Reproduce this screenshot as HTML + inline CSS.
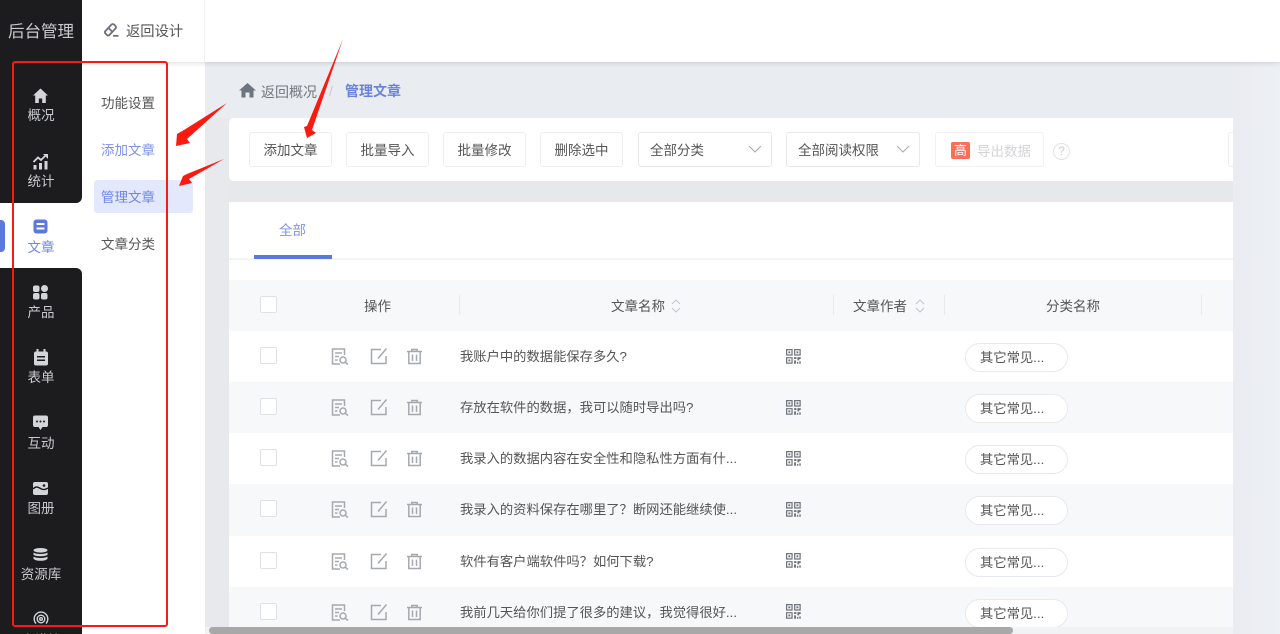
<!DOCTYPE html>
<html lang="zh"><head><meta charset="utf-8"><title>管理文章</title>
<style>
*{box-sizing:border-box;margin:0;padding:0}
html,body{width:1280px;height:634px;overflow:hidden}
body{position:relative;background:#e9ecf1;font-family:"Liberation Sans","Noto Sans CJK SC",sans-serif;font-size:13.5px;color:#555}
.a{position:absolute;white-space:nowrap}
.t{position:absolute;white-space:nowrap;line-height:20px}
.nav{position:absolute;left:0;width:82px;text-align:center;color:#c9cace;font-size:13.5px;line-height:18px}
.btn{position:absolute;top:132px;height:35px;background:#fff;border:1px solid #eceef1;border-radius:3px;text-align:center;line-height:35px;color:#555}
.sel{position:absolute;top:132px;height:35px;background:#fff;border:1px solid #e6e8ec;border-radius:3px;line-height:35px;color:#555;padding-left:11px}
.row{position:absolute;left:229px;width:1004px;height:51px}
.cb{position:absolute;left:31px;top:16px;width:17px;height:17px;background:#fff;border:1px solid #dfe1e6;border-radius:2px}
.tag{position:absolute;left:736px;top:12px;width:103px;height:29px;background:#fff;border:1px solid #e8e9ed;border-radius:15px;line-height:27px;padding-left:14px;color:#555;font-size:13.3px}
.ti{position:absolute;left:231px;top:16px;line-height:20px;font-size:13.3px;color:#555;white-space:nowrap}
svg{position:absolute;overflow:visible}
.div{position:absolute;top:295px;width:1px;height:20px;background:#e8e9ed}
</style></head><body>

<!-- second panel and header -->
<div class="a" style="left:0;top:0;width:205px;height:634px;background:#fff"></div>
<div class="a" style="left:1233px;top:62px;width:47px;height:572px;background:linear-gradient(90deg,#e9ecf1,#edf0f4)"></div>
<div class="a" style="left:82px;top:0;width:1198px;height:62px;background:#fff;box-shadow:0 1px 5px rgba(0,0,0,.14)"></div>
<div class="a" style="left:204px;top:0;width:1px;height:62px;background:#f0f1f3"></div>
<div class="a" style="left:205px;top:118px;width:24px;height:516px;background:#e7e9ed"></div>

<!-- sidebar -->
<div class="a" style="left:0;top:0;width:82px;height:203px;background:#1c1c1f;border-bottom-right-radius:6px"></div>
<div class="a" style="left:0;top:268px;width:82px;height:366px;background:#1c1c1f;border-top-right-radius:6px"></div>
<div class="a" style="left:0;top:220px;width:5px;height:32px;background:#5b78e0;border-radius:0 4px 4px 0"></div>
<div class="t" style="left:8px;top:22px;font-size:16.5px;color:#c9cace">后台管理</div>

<svg style="left:32px;top:87px" width="17" height="17" viewBox="0 0 17 17"><path d="M8.500 1.500 16 8.500h-2.200V16h-3.600v-4.500H6.800V16H3.200V8.500H1z" fill="#d4d5d9"/></svg>
<div class="nav" style="top:107px">概况</div>
<svg style="left:32px;top:153px" width="17" height="17" viewBox="0 0 17 17"><path d="M1.500 9 6 4.500l3 2.500 4-4" fill="none" stroke="#d4d5d9" stroke-width="1.800"/><path d="M11 1h5v5z" fill="#d4d5d9"/><rect x="1.500" y="12" width="3" height="4.500" fill="#d4d5d9"/><rect x="7" y="10" width="3" height="6.500" fill="#d4d5d9"/><rect x="12.500" y="8" width="3" height="8.500" fill="#d4d5d9"/></svg>
<div class="nav" style="top:173px">统计</div>
<svg style="left:33px;top:219px" width="15" height="15" viewBox="0 0 15 15"><rect x=".5" y=".5" width="14" height="14" rx="3" fill="#5b78e0"/><rect x="3.500" y="4" width="8" height="2" fill="#fff"/><rect x="3.500" y="8.500" width="8" height="2" fill="#fff"/></svg>
<div class="nav" style="top:239px;color:#6d87e6">文章</div>
<svg style="left:33px;top:285px" width="15" height="15" viewBox="0 0 15 15" fill="#d4d5d9"><rect x="0" y="0.500" width="6.500" height="6.500" rx="2"/><rect x="8" y="0" width="7" height="7" rx="3.500"/><rect x="0" y="8" width="6.500" height="6.500" rx="2"/><rect x="8" y="8" width="6.500" height="6.500" rx="2"/></svg>
<div class="nav" style="top:304px">产品</div>
<svg style="left:33px;top:349px" width="16" height="17" viewBox="0 0 16 17"><rect x="1" y="2.500" width="14" height="14" rx="2" fill="#d4d5d9"/><rect x="3.500" y="0" width="2" height="4" fill="#d4d5d9"/><rect x="10.500" y="0" width="2" height="4" fill="#d4d5d9"/><rect x="4" y="7" width="8" height="1.500" fill="#1c1c1f"/><rect x="4" y="10.500" width="8" height="1.500" fill="#1c1c1f"/></svg>
<div class="nav" style="top:369px">表单</div>
<svg style="left:33px;top:415px" width="15" height="16" viewBox="0 0 15 16"><path d="M2 .5h11a2 2 0 0 1 2 2V10a2 2 0 0 1-2 2h-3.500L7.500 15 5.500 12H2a2 2 0 0 1-2-2V2.500a2 2 0 0 1 2-2z" fill="#d4d5d9"/><circle cx="4" cy="6.500" r="1" fill="#1c1c1f"/><circle cx="7.500" cy="6.500" r="1" fill="#1c1c1f"/><circle cx="11" cy="6.500" r="1" fill="#1c1c1f"/></svg>
<div class="nav" style="top:435px">互动</div>
<svg style="left:33px;top:482px" width="15" height="13" viewBox="0 0 15 13"><rect width="15" height="13" rx="2" fill="#d4d5d9"/><path d="M0 7c3-3 5-2 7.500-.500S12 8 15 6" fill="none" stroke="#1c1c1f" stroke-width="1.500"/><circle cx="11" cy="3.500" r="1.300" fill="#1c1c1f"/></svg>
<div class="nav" style="top:500px">图册</div>
<svg style="left:33px;top:548px" width="15" height="13" viewBox="0 0 15 13" fill="#d4d5d9"><ellipse cx="7.500" cy="2.300" rx="7" ry="2.300"/><path d="M.5 4.500c2 2 12 2 14 0v2.200c-2 2-12 2-14 0zM.5 8.500c2 2 12 2 14 0v2.200c-2 2.800-12 2.800-14 0z"/></svg>
<div class="nav" style="top:566px">资源库</div>
<svg style="left:33px;top:611px" width="16" height="16" viewBox="0 0 16 16" fill="none" stroke="#d4d5d9" stroke-width="1.400"><path d="M3 12.500A6.800 6.800 0 1 1 13 12.500"/><circle cx="8" cy="8" r="3.800"/><circle cx="8" cy="8" r="1.300"/></svg>
<div class="nav" style="top:632px">小模块</div>

<!-- header button -->
<svg style="left:103px;top:22px" width="17" height="16" viewBox="0 0 17 16" fill="none" stroke="#6c7079" stroke-width="1.800"><path d="M2 9.500 8.500 2.500a1.800 1.800 0 0 1 2.500 0l1.500 1.500a1.800 1.800 0 0 1 0 2.500L6 13.500H4.500L2 11z"/><path d="M10 13.800h5.500" /><path d="M5.500 6 9.500 10" /></svg>
<div class="t" style="left:126px;top:22px;font-size:14.300px;color:#555">返回设计</div>

<!-- sub menu -->
<div class="a" style="left:94px;top:180px;width:99px;height:33px;background:#e3e8fc;border-radius:3px"></div>
<div class="t" style="left:101px;top:94px;color:#555">功能设置</div>
<div class="t" style="left:101px;top:141px;color:#7d93e8">添加文章</div>
<div class="t" style="left:101px;top:188px;color:#6d87e6">管理文章</div>
<div class="t" style="left:101px;top:235px;color:#555">文章分类</div>

<!-- breadcrumb -->
<svg style="left:239px;top:82px" width="17" height="16" viewBox="0 0 17 16"><path d="M8.500 1 17 8.500h-2.500V15.500h-4v-5h-4v5h-4V8.500H0z" fill="#6c7580"/></svg>
<div class="t" style="left:261px;top:82px;font-size:14px;color:#73777f">返回概况</div>
<div class="t" style="left:329px;top:81px;font-size:14px;color:#c9ccd2">/</div>
<div class="t" style="left:345px;top:81px;font-size:14px;font-weight:700;color:#6a82dc">管理文章</div>

<!-- toolbar -->
<div class="a" style="left:229px;top:118px;width:1004px;height:63px;background:#fff;border-radius:5px 0 0 5px"></div>
<div class="a" style="left:229px;top:181px;width:1004px;height:21px;background:#e7e8ec"></div>
<div class="btn" style="left:249px;width:83px">添加文章</div>
<div class="btn" style="left:346px;width:83px">批量导入</div>
<div class="btn" style="left:443px;width:83px">批量修改</div>
<div class="btn" style="left:540px;width:83px">删除选中</div>
<div class="sel" style="left:638px;width:134px">全部分类</div>
<svg style="left:748px;top:145px" width="14" height="9" viewBox="0 0 14 9"><path d="M1 1l6 6 6-6" fill="none" stroke="#a8abb2" stroke-width="1.100"/></svg>
<div class="sel" style="left:786px;width:134px">全部阅读权限</div>
<svg style="left:896px;top:145px" width="14" height="9" viewBox="0 0 14 9"><path d="M1 1l6 6 6-6" fill="none" stroke="#a8abb2" stroke-width="1.100"/></svg>
<div class="btn" style="left:935px;width:109px;border-color:#f0f1f3"></div>
<div class="a" style="left:951px;top:142px;width:19px;height:17px;background:#fb6f58;border-radius:2px;color:#fff;font-size:13px;line-height:17px;text-align:center">高</div>
<div class="t" style="left:977px;top:142px;color:#d3d4d7">导出数据</div>
<div class="a" style="left:1053px;top:143px;width:17px;height:17px;border:1px solid #e2e3e6;border-radius:50%;color:#cfd0d3;font-size:12px;line-height:15px;text-align:center">?</div>
<div class="a" style="left:1228px;top:132px;width:5px;height:35px;background:#fff;border:1px solid #eceef1;border-right:0;border-radius:3px 0 0 3px"></div>

<!-- main card -->
<div class="a" style="left:229px;top:202px;width:1004px;height:432px;background:#fff"></div>
<div class="t" style="left:279px;top:221px;color:#7d93e8">全部</div>
<div class="a" style="left:229px;top:258px;width:1004px;height:2px;background:#f3f4f6"></div>
<div class="a" style="left:254px;top:255px;width:78px;height:4px;background:#5b78e0"></div>

<!-- table header -->
<div class="a" style="left:229px;top:280px;width:1004px;height:51px;background:#f7f8fa"></div>
<div class="a" style="left:260px;top:296px;width:17px;height:17px;background:#fff;border:1px solid #dfe1e6;border-radius:2px"></div>
<div class="t" style="left:364px;top:297px;color:#555">操作</div>
<div class="div" style="left:459px"></div>
<div class="t" style="left:611px;top:297px;color:#555">文章名称</div>
<svg style="left:671px;top:299px" width="10" height="14" viewBox="0 0 10 14" fill="none" stroke="#c3c6cc" stroke-width="1"><path d="M1 5l4-4 4 4M1 9l4 4 4-4"/></svg>
<div class="div" style="left:833px"></div>
<div class="t" style="left:853px;top:297px;color:#555">文章作者</div>
<svg style="left:915px;top:299px" width="10" height="14" viewBox="0 0 10 14" fill="none" stroke="#c3c6cc" stroke-width="1"><path d="M1 5l4-4 4 4M1 9l4 4 4-4"/></svg>
<div class="div" style="left:944px"></div>
<div class="t" style="left:1046px;top:297px;color:#555">分类名称</div>
<div class="div" style="left:1201px"></div>

<svg width="0" height="0" style="left:0;top:0"><defs>
<g id="v" fill="none" stroke="#a5a8ad" stroke-width="1.500"><path d="M9 16H1.500V1h12V7"/><path d="M4 5h7M4 8.500h4M4 12h2.500"/><circle cx="12" cy="12" r="3"/><path d="M14.200 14.200l2.800 2.300"/></g>
<g id="e" fill="none" stroke="#a5a8ad" stroke-width="1.500"><path d="M16 8v7.500H1.500V1.500H11"/><path d="M16.500 .5 8 10.500" /></g>
<g id="d" fill="none" stroke="#a5a8ad" stroke-width="1.500"><path d="M1 3.500h15M5.800 3.500V1.500h5.400v2M2.800 3.500v12h11.400v-12M6.500 6.500v6.500M10.500 6.500v6.500"/></g>
<g id="q" fill="#70757d" transform="scale(.95)"><path fill-rule="evenodd" d="M0 0h7v7H0zM1.300 1.300v4.400h4.400V1.300zM8.500 0h7v7h-7zM9.800 1.300v4.400h4.400V1.300zM0 8.500h7v7H0zM1.300 9.800v4.400h4.400V9.800z"/><rect x="2.500" y="2.500" width="2" height="2"/><rect x="11" y="2.500" width="2" height="2"/><rect x="2.500" y="11" width="2" height="2"/><path d="M8.500 8.500h2.500v2H8.500zM12 8.500h3.500v2H14v1.500h-2zM8.500 12h2v3.500h-2zM11.500 13.500h1.500v2h-1.500zM14 13h1.500v2.500H14z"/></g>
</defs></svg>

<!-- rows -->
<div class="row" style="top:331px;background:#fff"><div class="cb"></div><svg style="left:102px;top:17px" width="18" height="18"><use href="#v"/></svg><svg style="left:141px;top:17px" width="18" height="18"><use href="#e"/></svg><svg style="left:177px;top:17px" width="17" height="18"><use href="#d"/></svg><div class="ti">我账户中的数据能保存多久?</div><svg style="left:557px;top:18px" width="16" height="16"><use href="#q"/></svg><div class="tag">其它常见...</div></div>
<div class="row" style="top:382px;background:#f7f8fa"><div class="cb"></div><svg style="left:102px;top:17px" width="18" height="18"><use href="#v"/></svg><svg style="left:141px;top:17px" width="18" height="18"><use href="#e"/></svg><svg style="left:177px;top:17px" width="17" height="18"><use href="#d"/></svg><div class="ti">存放在软件的数据&#xFF0C;我可以随时导出吗?</div><svg style="left:557px;top:18px" width="16" height="16"><use href="#q"/></svg><div class="tag">其它常见...</div></div>
<div class="row" style="top:433px;background:#fff"><div class="cb"></div><svg style="left:102px;top:17px" width="18" height="18"><use href="#v"/></svg><svg style="left:141px;top:17px" width="18" height="18"><use href="#e"/></svg><svg style="left:177px;top:17px" width="17" height="18"><use href="#d"/></svg><div class="ti">我录入的数据内容在安全性和隐私性方面有什...</div><svg style="left:557px;top:18px" width="16" height="16"><use href="#q"/></svg><div class="tag">其它常见...</div></div>
<div class="row" style="top:484px;background:#f7f8fa;height:52px"><div class="cb"></div><svg style="left:102px;top:17px" width="18" height="18"><use href="#v"/></svg><svg style="left:141px;top:17px" width="18" height="18"><use href="#e"/></svg><svg style="left:177px;top:17px" width="17" height="18"><use href="#d"/></svg><div class="ti">我录入的资料保存在哪里了&#xFF1F;断网还能继续使...</div><svg style="left:557px;top:18px" width="16" height="16"><use href="#q"/></svg><div class="tag">其它常见...</div></div>
<div class="row" style="top:536px;background:#fff"><div class="cb"></div><svg style="left:102px;top:17px" width="18" height="18"><use href="#v"/></svg><svg style="left:141px;top:17px" width="18" height="18"><use href="#e"/></svg><svg style="left:177px;top:17px" width="17" height="18"><use href="#d"/></svg><div class="ti">软件有客户端软件吗&#xFF1F;如何下载?</div><svg style="left:557px;top:17px" width="16" height="16"><use href="#q"/></svg><div class="tag">其它常见...</div></div>
<div class="row" style="top:587px;background:#f7f8fa;height:47px"><div class="cb"></div><svg style="left:102px;top:17px" width="18" height="18"><use href="#v"/></svg><svg style="left:141px;top:17px" width="18" height="18"><use href="#e"/></svg><svg style="left:177px;top:17px" width="17" height="18"><use href="#d"/></svg><div class="ti">我前几天给你们提了很多的建议&#xFF0C;我觉得很好...</div><svg style="left:557px;top:17px" width="16" height="16"><use href="#q"/></svg><div class="tag">其它常见...</div></div>

<!-- scrollbar -->
<div class="a" style="left:205px;top:627px;width:1028px;height:7px;background:#f1f2f4"></div>
<div class="a" style="left:209px;top:627px;width:804px;height:7px;background:#a8a8a8;border-radius:4px"></div>

<!-- annotations -->
<div class="a" style="left:12px;top:61px;width:156px;height:566px;border:2.500px solid #fb1a10;border-radius:3px"></div>
<svg style="left:0;top:0" width="1280" height="634" viewBox="0 0 1280 634">
<path d="M343 39 307 126 304 127 307 138 316 133 312 130z" fill="#fb1a10"/>
<path d="M227 103 184 130 177 134 176 146 190 143 187 139z" fill="#fb1a10"/>
<path d="M224 159 187 174 183 176 179 186 192 183 189 179z" fill="#fb1a10"/>
</svg>
</body></html>
